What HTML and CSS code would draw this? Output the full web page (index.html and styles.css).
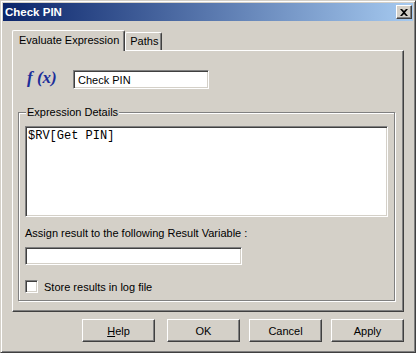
FILE: index.html
```html
<!DOCTYPE html>
<html lang="en">
<head>
    <meta charset="UTF-8">
    <title>Check PIN</title>
    <link rel="stylesheet" href="styles.css">
</head>
<body>

<div class="window">
    <div class="titlebar">
        <span class="title">Check PIN</span>
        <span class="close">
            <svg width="8" height="7" viewBox="0 0 8 7">
                <path d="M0 0h2l2 2 2-2h2L5 3.5 8 7H6L4 5 2 7H0l3-3.5z" fill="#000"/>
            </svg>
        </span>
    </div>

    <div class="content">
        <div class="tabs">
            <div class="tab active">Evaluate Expression</div>
            <div class="tab">Paths</div>
        </div>

        <div class="panel">
            <div class="name-row">
                <span class="fx">f (x)</span>
                <div class="field name">Check PIN</div>
            </div>

            <fieldset class="group">
                <legend>Expression Details</legend>
                <div class="field expr">$RV[Get PIN]</div>
                <div class="var-label">Assign result to the following Result Variable :</div>
                <div class="field var"></div>
                <div class="check-row">
                    <span class="checkbox"></span>
                    <span>Store results in log file</span>
                </div>
            </fieldset>
        </div>

        <div class="buttons">
            <div class="btn help"><u>H</u>elp</div>
            <div class="btn">OK</div>
            <div class="btn">Cancel</div>
            <div class="btn">Apply</div>
        </div>
    </div>
</div>

</body>
</html>
```

FILE: styles.css
```css
body {
    margin: 0;
    font-family: "Liberation Sans", Arial, sans-serif;
    font-size: 11px;
    color: #000;
    background: #d4d0c8;
}
.window {
    width: 416px;
    height: 353px;
    box-sizing: border-box;
    padding: 2px;
    background: #d4d0c8;
    border: 1px solid;
    border-color: #d4d0c8 #404040 #404040 #d4d0c8;
    box-shadow: inset 1px 1px #fff, inset -1px -1px #808080;
}
.titlebar {
    height: 18px;
    display: flex;
    align-items: center;
    justify-content: space-between;
    padding: 0 1px 0 2px;
    background: linear-gradient(to right, #0a246a, #a6caf0);
    color: #fff;
    font-weight: bold;
    font-size: 11.5px;
}
.close {
    width: 16px;
    height: 14px;
    box-sizing: border-box;
    display: flex;
    align-items: center;
    justify-content: center;
    background: #d4d0c8;
    border: 1px solid;
    border-color: #fff #404040 #404040 #fff;
    box-shadow: inset -1px -1px #808080;
}
.content {
    padding: 9px 0 0 9px;
}
.tabs {
    display: flex;
    align-items: flex-end;
    height: 20px;
}
.tab {
    position: relative;
    height: 18px;
    box-sizing: border-box;
    padding: 2px 3px 0 4px;
    border: 1px solid;
    border-bottom: none;
    border-color: #fff #404040 #fff #fff;
    border-radius: 2px 2px 0 0;
    box-shadow: inset -1px 0 #808080;
    background: #d4d0c8;
}
.tab.active {
    height: 21px;
    margin-bottom: -1px;
    padding: 3px 5px 0 6px;
    z-index: 1;
}
.panel {
    width: 392px;
    height: 262px;
    box-sizing: border-box;
    border: 1px solid;
    border-color: #fff #404040 #404040 #fff;
    box-shadow: inset -1px -1px #808080;
    padding-top: 19px;
}
.name-row {
    display: flex;
    align-items: center;
    padding-left: 14px;
}
.fx {
    width: 46px;
    font-family: "Liberation Serif", "Times New Roman", serif;
    font-weight: bold;
    font-style: italic;
    font-size: 17px;
    color: #1c2e9a;
    margin-top: -3px;
}
.field {
    box-sizing: border-box;
    background: #fff;
    border: 1px solid;
    border-color: #808080 #fff #fff #808080;
    box-shadow: inset 1px 1px #404040, inset -1px -1px #d4d0c8;
}
.name {
    width: 136px;
    height: 19px;
    padding: 3px 4px;
    line-height: 12px;
}
.group {
    margin: 17px 8px 0 5px;
    padding: 8px 6px 0 6px;
    min-width: 0;
    height: 195px;
    box-sizing: border-box;
    border: 1px solid #808080;
    box-shadow: inset 1px 1px #fff, 1px 1px #fff;
}
.group legend {
    padding: 0 1px;
    margin-left: 1px;
    background: #d4d0c8;
}
.expr {
    height: 91px;
    padding: 3px 2px;
    font-family: "Liberation Mono", "Courier New", monospace;
    font-size: 12px;
    line-height: 12px;
}
.var-label {
    margin-top: 10px;
    line-height: 13px;
}
.var {
    width: 217px;
    height: 18px;
    margin-top: 7px;
}
.check-row {
    display: flex;
    align-items: center;
    gap: 6px;
    margin-top: 15px;
}
.checkbox {
    width: 13px;
    height: 13px;
    box-sizing: border-box;
    background: #fff;
    border: 1px solid;
    border-color: #808080 #fff #fff #808080;
    box-shadow: inset 1px 1px #404040, inset -1px -1px #d4d0c8;
}
.buttons {
    width: 392px;
    display: flex;
    justify-content: flex-end;
    gap: 9px;
    margin-top: 7px;
}
.btn {
    width: 73px;
    height: 23px;
    box-sizing: border-box;
    display: flex;
    align-items: center;
    justify-content: center;
    border: 1px solid;
    border-color: #fff #404040 #404040 #fff;
    box-shadow: inset -1px -1px #808080;
}
.btn.help {
    margin-right: 3px;
}
```
